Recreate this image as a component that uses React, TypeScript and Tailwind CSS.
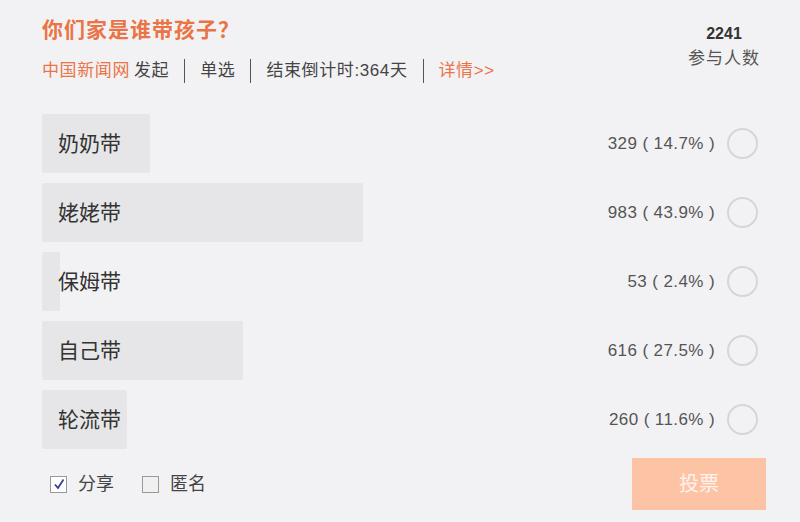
import { useState } from 'react'

const options = [
  { label: '奶奶带', count: 329, pct: 14.7 },
  { label: '姥姥带', count: 983, pct: 43.9 },
  { label: '保姆带', count: 53, pct: 2.4 },
  { label: '自己带', count: 616, pct: 27.5 },
  { label: '轮流带', count: 260, pct: 11.6 },
]

const TRACK = 732

export default function App() {
  const [selected, setSelected] = useState<number | null>(null)
  const [share, setShare] = useState(true)
  const [anonymous, setAnonymous] = useState(false)

  return (
    <div
      className="w-[800px] h-[522px] bg-[#f2f2f4] pl-[42px] pr-[34px] pt-[16px] text-[#333]"
      style={{ fontFamily: '"Liberation Sans", "Noto Sans CJK SC", sans-serif' }}
    >
      {/* header */}
      <div className="flex justify-between">
        <div>
          <h1 className="text-[21px] leading-[28px] font-bold tracking-[1px] text-[#ea7446]">你们家是谁带孩子？</h1>
          <div className="mt-[15px] flex items-center text-[17px] leading-[22px] tracking-[0.6px] text-[#444]">
            <span className="text-[#ea7446]">中国新闻网</span>
            <span className="ml-[4px]">发起</span>
            <span className="mx-[15px] h-[24px] w-px bg-[#555]" />
            <span>单选</span>
            <span className="mx-[15px] h-[24px] w-px bg-[#555]" />
            <span>结束倒计时:364天</span>
            <span className="mx-[15px] h-[24px] w-px bg-[#555]" />
            <span className="text-[#ea7446]">详情&gt;&gt;</span>
          </div>
        </div>
        <div className="mt-[8px] w-[84px] text-center">
          <div className="text-[16px] leading-[20px] font-bold text-[#333]">2241</div>
          <div className="mt-[4px] text-[17px] leading-[22px] tracking-[1px] text-[#555]">参与人数</div>
        </div>
      </div>

      {/* options */}
      <div className="mt-[31px] flex flex-col gap-[10px] pr-[8px]">
        {options.map((o, i) => (
          <div key={o.label} className="relative flex h-[59px] items-center" onClick={() => setSelected(i)}>
            <div
              className="absolute left-0 top-0 h-full rounded-[2px] bg-[#e6e6e8]"
              style={{ width: Math.round((o.pct / 100) * TRACK) }}
            />
            <span className="relative ml-[16px] text-[21px] text-[#333]">{o.label}</span>
            <span className="relative ml-auto text-[17px] tracking-[0.4px] text-[#555]">
              {o.count} ( {o.pct}% )
            </span>
            <span
              className={`relative ml-[12px] h-[31px] w-[31px] rounded-full border-2 ${
                selected === i ? 'border-[#ea7446]' : 'border-[#d6d6d8]'
              } bg-transparent`}
            />
          </div>
        ))}
      </div>

      {/* footer */}
      <div className="mt-[9px] flex items-center justify-between">
        <div className="ml-[8px] flex items-center text-[18px] text-[#444]">
          <button
            onClick={() => setShare(!share)}
            className="flex h-[17px] w-[17px] items-center justify-center border border-[#999] bg-white"
          >
            {share && (
              <svg width="12" height="12" viewBox="0 0 12 12">
                <path d="M2 6.5 L5 10 L10.5 1.5" fill="none" stroke="#3a3f8f" strokeWidth="1.8" />
              </svg>
            )}
          </button>
          <span className="ml-[11px]">分享</span>
          <button
            onClick={() => setAnonymous(!anonymous)}
            className="ml-[28px] h-[17px] w-[17px] border border-[#999] bg-[#f0f0f0]"
          />
          <span className="ml-[11px]">匿名</span>
        </div>
        <button className="h-[52px] w-[134px] bg-[#fdc3a5] text-[20px] text-[#fff3ec]">投票</button>
      </div>
    </div>
  )
}
